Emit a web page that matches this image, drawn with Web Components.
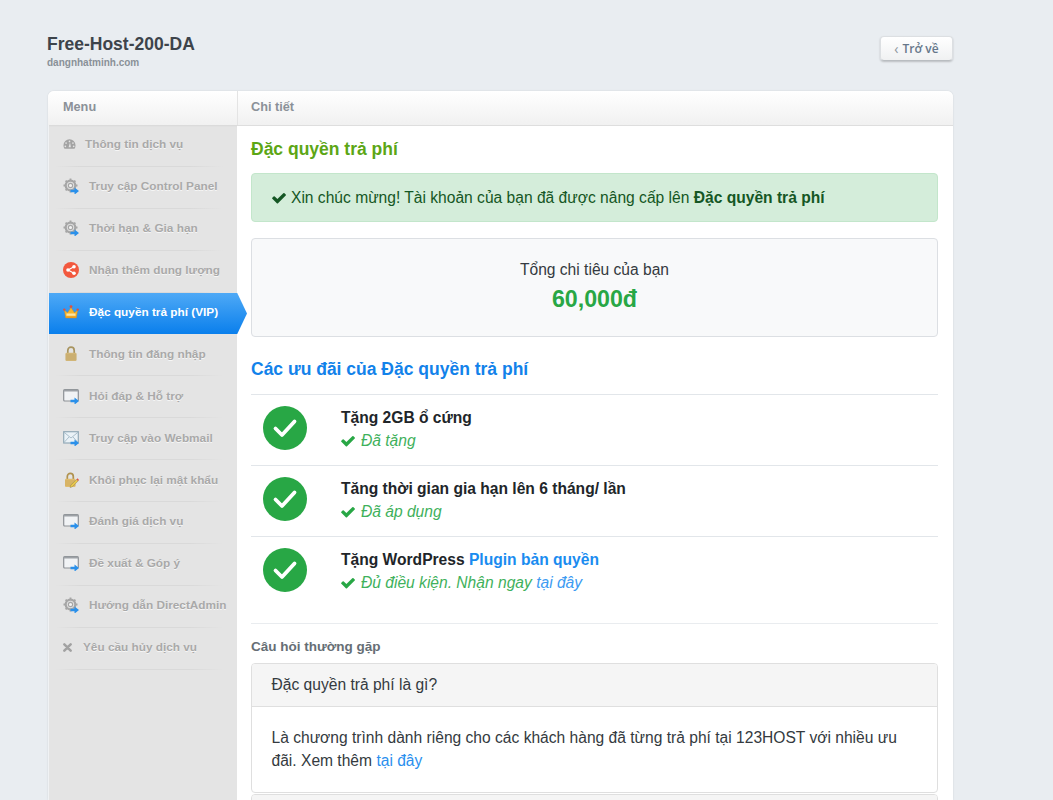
<!DOCTYPE html>
<html lang="vi">
<head>
<meta charset="utf-8">
<title>Đặc quyền trả phí</title>
<style>
html,body{margin:0;padding:0;height:100%;overflow:hidden;background:#e9edf1;font-family:"Liberation Sans",Arial,sans-serif;}
</style>
</head>
<body>
<app-shell>
  <page-head slot="head" title-text="Free-Host-200-DA" sub="dangnhatminh.com"></page-head>
  <panel-head slot="panelhead"></panel-head>
  <side-menu slot="menu">
    <menu-item icon="gauge" w="13" gap="9">Thông tin dịch vụ</menu-item>
    <menu-item icon="gear">Truy cập Control Panel</menu-item>
    <menu-item icon="gear">Thời hạn &amp; Gia hạn</menu-item>
    <menu-item icon="share" solid>Nhận thêm dung lượng</menu-item>
    <menu-item icon="crown" active>Đặc quyền trả phí (VIP)</menu-item>
    <menu-item icon="lock">Thông tin đăng nhập</menu-item>
    <menu-item icon="window">Hỏi đáp &amp; Hỗ trợ</menu-item>
    <menu-item icon="mail">Truy cập vào Webmail</menu-item>
    <menu-item icon="lockpen">Khôi phục lại mật khẩu</menu-item>
    <menu-item icon="window">Đánh giá dịch vụ</menu-item>
    <menu-item icon="window">Đề xuất &amp; Góp ý</menu-item>
    <menu-item icon="gear">Hướng dẫn DirectAdmin</menu-item>
    <menu-item icon="x" w="9" gap="11">Yêu cầu hủy dịch vụ</menu-item>
  </side-menu>
  <main-content slot="main">
    <success-alert>Xin chúc mừng! Tài khoản của bạn đã được nâng cấp lên <b>Đặc quyền trả phí</b></success-alert>
    <stat-box label="Tổng chi tiêu của bạn" value="60,000đ"></stat-box>
    <perk-list>
      <perk-row>Tặng 2GB ổ cứng<span slot="status">Đã tặng</span></perk-row>
      <perk-row>Tăng thời gian gia hạn lên 6 tháng/ lần<span slot="status">Đã áp dụng</span></perk-row>
      <perk-row>Tặng WordPress <a href="#" style="color:#1a8cf0;text-decoration:none">Plugin bản quyền</a><span slot="status">Đủ điều kiện. Nhận ngay <a href="#" style="color:#3d9bf2;text-decoration:none">tại đây</a></span></perk-row>
    </perk-list>
    <faq-card q="Đặc quyền trả phí là gì?">Là chương trình dành riêng cho các khách hàng đã từng trả phí tại 123HOST với nhiều ưu<br>đãi. Xem thêm <a href="#" style="color:#2a8fee;text-decoration:none">tại đây</a></faq-card>
    <faq-card q=" " tail></faq-card>
  </main-content>
</app-shell>
<script>
const FA_CHECK="M1671 566q0 40-28 68l-724 724-136 136q-28 28-68 28t-68-28l-136-136-362-362q-28-28-28-68t28-68l136-136q28-28 68-28t68 28l294 295 656-657q28-28 68-28t68 28l136 136q28 28 28 68z";
const ARROW='<path d="M7.500 11.700h4v-2.300l4.500 3.600-4.500 3.600v-2.300h-4z" fill="#2a90ea"/>';
const ICONS={
gauge:'<svg viewBox="0 0 14 12" width="100%" height="12"><path d="M7 1a6.500 6.500 0 0 0-6.500 6.500c0 1.400.4 2.600 1.100 3.500h10.800c.7-.9 1.100-2.100 1.100-3.500A6.500 6.500 0 0 0 7 1z" fill="#a3a3a3"/><circle cx="7" cy="3.200" r=".9" fill="#e4e4e4"/><circle cx="3.300" cy="5" r=".9" fill="#e4e4e4"/><circle cx="10.700" cy="5" r=".9" fill="#e4e4e4"/><circle cx="2.500" cy="8.500" r=".9" fill="#e4e4e4"/><circle cx="11.500" cy="8.500" r=".9" fill="#e4e4e4"/><path d="M7.600 4.500 6 9.500h2.500z" fill="#e4e4e4"/></svg>',
gear:'<svg viewBox="0 0 16 16" width="16" height="16"><g fill="none" stroke="#a6a6a6"><circle cx="7.500" cy="7.500" r="4.800" stroke-width="2.200" fill="#dedede"/><circle cx="7.500" cy="7.500" r="2.100" stroke-width="1.100" fill="#f2f2f2"/><path d="M7.500.5v2M7.500 12.500v2M.5 7.500h2M12.500 7.500h2M2.600 2.600 4 4M11 11l1.400 1.400M2.600 12.400 4 11M11 4l1.400-1.400" stroke-width="1.800"/></g>'+ARROW+'</svg>',
share:'<svg viewBox="0 0 16 16" width="16" height="16"><circle cx="8" cy="8" r="8" fill="#f2583e"/><g fill="#fff"><circle cx="11" cy="4.800" r="1.800"/><circle cx="11" cy="11.200" r="1.800"/><circle cx="5" cy="8" r="1.800"/></g><path d="M11 4.800 5 8l6 3.200" stroke="#fff" stroke-width="1.100" fill="none"/></svg>',
crown:'<svg viewBox="0 0 16 14" width="16" height="14"><path d="M1.300 5 4.500 7.800 8 2.500 11.500 7.800 14.700 5l-1.400 8H2.700z" fill="#f6b52c" stroke="#d9861a" stroke-width=".4"/><path d="M3.500 8.500h9v2.300h-9z" fill="#fbe6a6"/><path d="M3 11.500h10v1.600H3z" fill="#e79a1f"/><circle cx="8" cy="1.600" r="1.400" fill="#e2503c"/><circle cx="1.300" cy="4.600" r="1.200" fill="#e2503c"/><circle cx="14.700" cy="4.600" r="1.200" fill="#e2503c"/></svg>',
lock:'<svg viewBox="0 0 16 16" width="16" height="16"><path d="M4.800 7V4.400a3.200 3.200 0 0 1 6.400 0V7" fill="none" stroke="#a8945f" stroke-width="1.700"/><rect x="2.500" y="6.800" width="11" height="8.200" rx="1" fill="#d2b677"/><path d="M2.500 9h11M2.500 11h11M2.500 13h11" stroke="#bda265" stroke-width=".6"/></svg>',
lockpen:'<svg viewBox="0 0 16 16" width="16" height="16"><path d="M4.300 7V4.400a3 3 0 0 1 6 0V7" fill="none" stroke="#b0924e" stroke-width="1.700"/><rect x="2" y="6.800" width="10.500" height="8.200" rx="1" fill="#e0bd70"/><path d="M2 9h10.500M2 11h10.500M2 13h10.500" stroke="#c7a253" stroke-width=".6"/><path d="M7 15.500l.6-2.200 6-6 1.600 1.600-6 6z" fill="#e9c84a" stroke="#555" stroke-width=".3"/><path d="M13.600 7.300l1-1 1.400 1.600-1 1z" fill="#e2503c"/></svg>',
window:'<svg viewBox="0 0 16 16" width="16" height="16"><rect x=".7" y="1.700" width="14.600" height="11.300" rx="1" fill="#f1f3f5" stroke="#8d9196" stroke-width="1.200"/><rect x=".7" y="1.700" width="14.600" height="1.800" fill="#9da1a6"/>'+ARROW+'</svg>',
mail:'<svg viewBox="0 0 16 16" width="16" height="16"><rect x=".7" y="1.700" width="14.600" height="11.300" fill="#eaf2f7" stroke="#92a9b7" stroke-width="1.200"/><path d="M1 2.200 8 8l7-5.800M1 12.500l5-5.500M15 12.500l-5-5.500" fill="none" stroke="#a3b8c5" stroke-width=".9"/>'+ARROW+'</svg>',
x:'<svg viewBox="0 0 10 10" width="9" height="9"><path d="M1.500 1.500l7 7M8.500 1.500l-7 7" stroke="#a2a2a2" stroke-width="2.800" stroke-linecap="round"/></svg>'
};

function def(name,css,html){
  customElements.define(name,class extends HTMLElement{
    constructor(){super();this.attachShadow({mode:"open"});}
    connectedCallback(){
      const a=n=>this.getAttribute(n);
      this.shadowRoot.innerHTML='<style>'+css+'</style>'+(typeof html==="function"?html(a,this):html);
    }
  });
}

def("app-shell",`
:host{display:block;height:100vh;overflow:hidden;box-sizing:border-box;padding:0 100px 0 48px;}
.panel{display:flex;flex-direction:column;height:calc(100vh - 91px);background:#fff;border-radius:6px 6px 0 0;box-shadow:0 0 2px rgba(0,0,0,.12);}
.body{flex:1;display:grid;grid-template-columns:189px 1fr;min-height:0;}
`,`<slot name="head"></slot><div class="panel"><slot name="panelhead"></slot><div class="body"><slot name="menu"></slot><slot name="main"></slot></div></div>`);

def("page-head",`
:host{display:flex;justify-content:space-between;align-items:flex-start;height:91px;box-sizing:border-box;padding-top:35px;margin-left:-1px;}
.t{font-size:17.500px;font-weight:700;line-height:18px;color:#3d444b;}
.s{font-size:10px;font-weight:700;line-height:14px;color:#8a9198;margin-top:3px;}
.b{box-sizing:border-box;height:25px;width:73px;margin-top:1px;display:flex;align-items:center;justify-content:center;gap:4px;background:linear-gradient(#fff,#f0f1f2);border:1px solid #dcdfe2;border-bottom-color:#b9bdc1;border-radius:4px;box-shadow:0 1px 2px rgba(0,0,0,.2);font:600 12px "Open Sans","Liberation Sans",sans-serif;color:#66778a;}
.c{color:#8e959c;font-weight:400;font-size:14px;}
`,a=>`<div><div class="t">${a("title-text")}</div><div class="s">${a("sub")}</div></div><div class="b"><span class="c">‹</span>Trở về</div>`);

def("panel-head",`
:host{display:grid;grid-template-columns:189px 1fr;height:35px;box-sizing:border-box;background:linear-gradient(#fff,#f1f1f1);border-bottom:1px solid #dedede;border-radius:6px 6px 0 0;font-size:12.700px;font-weight:700;color:#8b9198;line-height:33px;}
div{padding-left:15px;}
div+div{border-left:1px solid #e4e4e4;padding-left:13px;}
`,`<div>Menu</div><div>Chi tiết</div>`);

def("side-menu",`
:host{display:block;background:#e4e4e4;border-left:1px solid #f0f2f4;position:relative;z-index:2;margin-top:-1px;box-shadow:inset 0 2px 2px -1px rgba(0,0,0,.05);}
`,`<slot></slot>`);

def("menu-item",`
:host{display:flex;align-items:center;box-sizing:border-box;height:41.900px;padding:0 0 3px 14px;position:relative;font-size:11.800px;font-weight:700;color:#a9a9a9;text-shadow:0 1px 0 #f6f6f6;white-space:nowrap;}
:host::after{content:"";position:absolute;left:6px;right:14px;bottom:0;height:1px;background:linear-gradient(90deg,#e4e4e4,#d9d9d9 15%,#d9d9d9 80%,#e4e4e4);}
:host([active])::after{display:none;}
:host([active]){margin-right:-11px;padding:0 0 3px 14px;color:#fff;text-shadow:none;background:linear-gradient(#4ea9f6,#0a7fec);clip-path:polygon(0 0,188px 0,198px 50%,188px 100%,0 100%);}
.i{flex:none;display:flex;align-items:center;justify-content:flex-start;}
`,(a)=>{const w=a("w")||16,g=a("gap")||10;return `<span class="i" style="width:${w}px;margin-right:${g}px">${ICONS[a("icon")]}</span><slot></slot>`});

def("main-content",`
:host{display:block;padding:13px 15px 0 14px;min-width:0;}
h2{margin:0;font-size:17.500px;line-height:20px;font-weight:700;color:#5ca615;}
::slotted(success-alert){margin-top:14px;}
::slotted(stat-box){margin-top:16px;}
`,`<h2>Đặc quyền trả phí</h2><slot></slot>`);

def("success-alert",`
:host{display:flex;align-items:center;gap:5px;box-sizing:border-box;height:49px;padding:0 20px;background:#d4edda;border:1px solid #c3e6cb;border-radius:4px;font-size:15.600px;color:#155724;}
svg{flex:none;}
`,`<svg width="14" height="14" viewBox="112 300 1560 1200"><path fill="#155724" d="${FA_CHECK}"/></svg><span><slot></slot></span>`);

def("stat-box",`
:host{display:block;box-sizing:border-box;height:99px;background:#f8f9fa;border:1px solid #dcdfe3;border-radius:4px;text-align:center;padding-top:21px;color:#343a40;font-size:15.600px;line-height:20px;}
.v{font-size:23.200px;font-weight:700;line-height:28px;color:#28a745;margin-top:5px;}
`,a=>`<div>${a("label")}</div><div class="v">${a("value")}</div>`);

def("perk-list",`
:host{display:block;}
h3{margin:22px 0 15px;font-size:17.500px;line-height:20px;font-weight:700;color:#1282ea;}
.l{border-bottom:1px solid #e9ecef;padding-bottom:16px;}
h4{margin:15px 0 8px;font-size:13.500px;line-height:16px;font-weight:700;color:#666e75;}
`,`<h3>Các ưu đãi của Đặc quyền trả phí</h3><div class="l"><slot></slot></div><h4>Câu hỏi thường gặp</h4>`);

def("perk-row",`
:host{display:flex;align-items:flex-start;box-sizing:border-box;height:71px;border-top:1px solid #e2e6ea;padding:11px 0 0 12px;}
.c{flex:none;width:44px;height:44px;border-radius:50%;background:#28a745;display:flex;align-items:center;justify-content:center;margin-right:34px;}
.t{font-size:15.600px;line-height:24px;font-weight:700;color:#212529;}
.s{font-size:15.600px;line-height:24px;font-style:italic;color:#3fb15c;display:flex;align-items:center;gap:6px;margin-top:-1px;}
svg.k{flex:none;}
`,`<div class="c"><svg width="26" height="22" viewBox="0 0 26 22"><path d="M3.500 11.500 10 18 22.500 4.500" fill="none" stroke="#fff" stroke-width="3.800" stroke-linecap="round" stroke-linejoin="round"/></svg></div><div><div class="t"><slot></slot></div><div class="s"><svg class="k" width="14" height="14" viewBox="112 300 1560 1200"><path fill="#28a745" d="${FA_CHECK}"/></svg><span><slot name="status"></slot></span></div></div>`);

def("faq-card",`
:host{display:block;box-sizing:border-box;border:1px solid #dfdfdf;border-radius:4px;margin-bottom:1px;color:#343a40;font-size:15.600px;overflow:hidden;}
.h{height:43px;box-sizing:border-box;background:#f5f5f5;border-bottom:1px solid #dfdfdf;padding:0 19.500px;line-height:41px;}
.b{padding:19px 19.500px 20px;line-height:23px;height:85px;box-sizing:border-box;}
:host([tail]) .b{display:none;}
`,(a)=>`<div class="h">${a("q")}</div><div class="b"><slot></slot></div>`);
</script>
</body>
</html>
